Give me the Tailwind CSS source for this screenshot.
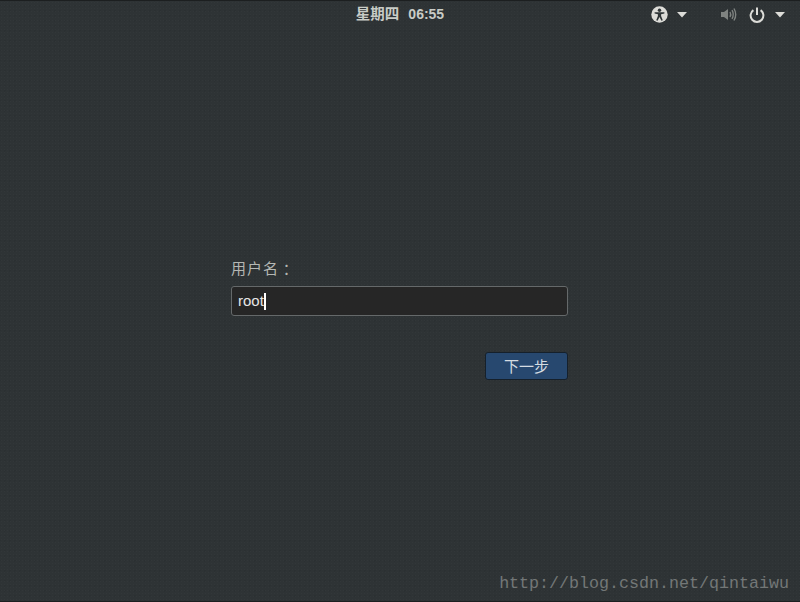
<!DOCTYPE html>
<html lang="zh-CN">
<head>
    <meta charset="UTF-8">
    <meta name="viewport" content="width=device-width, initial-scale=1.0">
    <title>Login</title>
    <script src="https://cdn.jsdelivr.net/npm/@tailwindcss/browser@4"></script>
</head>
<body class="m-0 p-0 bg-[#2e3436]">
    <div class="relative flex flex-col w-[800px] h-[602px] overflow-hidden bg-[#2e3335] border-t border-b border-[#1c1f20] font-['Liberation_Sans','Noto_Sans_CJK_SC',sans-serif] bg-[radial-gradient(#323739_1px,transparent_1px),radial-gradient(#2b3032_1px,transparent_1px)] bg-[length:3px_3px,5px_5px] bg-[position:0_0,2px_2px]">

        <!-- Top bar -->
        <div class="grid grid-cols-[1fr_auto_1fr] items-center h-[27px] shrink-0 text-[#d3d7cf]">
            <div></div>
            <div class="flex items-center gap-[9px] font-bold text-[#c8cbc6]">
                <span class="text-[14.5px]">星期四</span>
                <span class="text-[14px]">06:55</span>
            </div>
            <div class="flex items-center justify-end pr-[15px]">
                <!-- accessibility -->
                <svg width="17" height="17" viewBox="0 0 17 17" class="mr-[9px]">
                    <circle cx="8.5" cy="8.5" r="8.2" fill="#dcdcd8"/>
                    <circle cx="8.5" cy="4.2" r="1.7" fill="#2e3436"/>
                    <path d="M3.6 6.2 L13.4 6.2 L13.4 7.5 L10.1 8.2 L10.1 10 L11.8 14.2 L10.4 14.7 L8.5 11 L6.6 14.7 L5.2 14.2 L6.9 10 L6.9 8.2 L3.6 7.5 Z" fill="#2e3436"/>
                </svg>
                <svg width="10" height="6" viewBox="0 0 10 6" class="mr-[33px]"><path d="M0 0 H10 L5 5.5 Z" fill="#dcdcd8"/></svg>
                <!-- volume -->
                <svg width="17" height="17" viewBox="0 0 17 17" class="mr-[12px]" fill="none" stroke="#7f8381">
                    <path d="M1 6 H4 L8 3 V14 L4 11 H1 Z" fill="#7f8381" stroke="none"/>
                    <path d="M10 6 Q11.5 8.5 10 11" stroke-width="1.4"/>
                    <path d="M12 4.2 Q14.5 8.5 12 12.8" stroke-width="1.4"/>
                    <path d="M14 2.5 Q17.4 8.5 14 14.5" stroke-width="1.4"/>
                </svg>
                <!-- power -->
                <svg width="16" height="16" viewBox="0 0 16 16" class="mr-[10px]" fill="none" stroke="#dcdcd8" stroke-width="2">
                    <path d="M4.4 3.2 A6.4 6.4 0 1 0 11.6 3.2"/>
                    <path d="M8 0.5 V8"/>
                </svg>
                <svg width="10" height="6" viewBox="0 0 10 6"><path d="M0 0 H10 L5 5.5 Z" fill="#dcdcd8"/></svg>
            </div>
        </div>

        <!-- Login form -->
        <div class="w-[337px] ml-[231px] mt-[231px] flex flex-col">
            <label class="flex h-[20px] items-center text-[15px] leading-[20px] text-[#b4b7b3] tracking-[1px]">用户名<span lang="zh-TW" class="font-['Noto_Sans_CJK_TC']">：</span></label>
            <div class="mt-[7px] h-[30px] w-[337px] flex items-center pl-[6px] bg-[#262626] border border-[#65696a] rounded-[3px] text-[15px] text-[#e6e6e6]">
                root<span class="w-[2px] h-[17px] bg-white"></span>
            </div>
            <button class="self-end mt-[36px] w-[83px] h-[28px] pt-[2px] bg-[#27486f] border border-[#15202b] rounded-[3px] text-[15px] text-[#d5dce2]">下一步</button>
        </div>

        <!-- Watermark -->
        <div class="absolute right-[11px] bottom-[7px] font-['Liberation_Mono','Noto_Sans_CJK_SC',monospace] text-[16.67px] leading-[20px] text-[#737777]">http://blog.csdn.net/qintaiwu</div>
    </div>
</body>
</html>
